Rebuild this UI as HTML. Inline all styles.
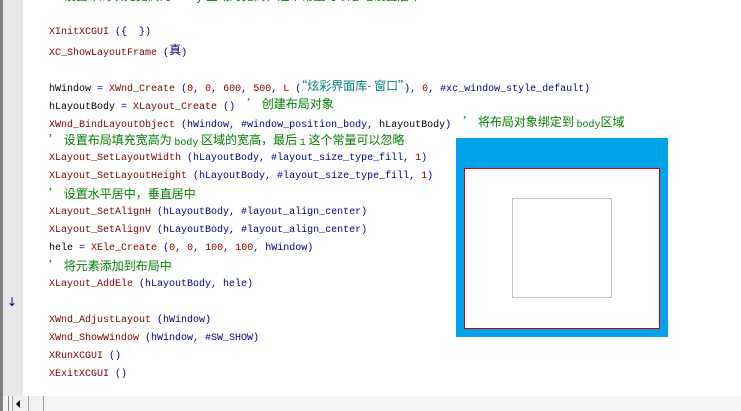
<!DOCTYPE html>
<html><head><meta charset="utf-8"><style>
body{margin:0;width:741px;height:411px;background:#fff;position:relative;overflow:hidden;font-family:"Liberation Mono","Noto Sans CJK SC",monospace;font-size:10px}
.l{position:absolute;left:49px;height:18px;line-height:18px;white-space:pre;color:#000;margin-top:2px}
.r{color:#800000}.n{color:#000080}.g{color:#008000}.t{color:#008080}
.c{font-family:"Noto Sans CJK SC","WenQuanYi Zen Hei",sans-serif;font-size:12px;position:relative;top:-1px}
</style></head><body>
<div style="position:absolute;left:0;top:0;width:3px;height:411px;background:#808080"></div>
<div style="position:absolute;left:3px;top:0;width:20px;height:396px;background:#e8e8e8"></div>
<div class="l g" style="top:-14px"><span class="c">’ 设置布局填充宽高为 body 区域的宽高，这个常量可以忽略设置居中</span></div>
<div class="l" style="top:22px"><span class="r">XInitXCGUI</span> <span class="n">({  })</span></div>
<div class="l" style="top:40px"><span class="r">XC_ShowLayoutFrame</span> <span class="n">(<span class="c">真</span>)</span></div>
<div class="l" style="top:76px">hWindow <span class="n">=</span> <span class="r">XWnd_Create</span> <span class="n">(</span><span class="r">0</span><span class="n">, </span><span class="r">0</span><span class="n">, </span><span class="r">600</span><span class="n">, </span><span class="r">500</span><span class="n">, </span><span class="r">L</span> <span class="n">(</span><span class="t c">“炫彩界面库- 窗口”</span><span class="n">), </span><span class="r">0</span><span class="n">, #xc_window_style_default)</span></div>
<div class="l" style="top:94px">hLayoutBody <span class="n">=</span> <span class="r">XLayout_Create</span> <span class="n">()</span>  <span class="g c">’ 创建布局对象</span></div>
<div class="l" style="top:112px"><span class="r">XWnd_BindLayoutObject</span> <span class="n">(hWindow, #window_position_body, </span>hLayoutBody<span class="n">)</span>  <span class="g c">’ 将布局对象绑定到 </span><span class="g">body</span><span class="g c">区域</span></div>
<div class="l g" style="top:130px"><span class="c">’ 设置布局填充宽高为 </span>body<span class="c"> 区域的宽高，最后 </span>1<span class="c"> 这个常量可以忽略</span></div>
<div class="l" style="top:148px"><span class="r">XLayout_SetLayoutWidth</span> <span class="n">(hLayoutBody, #layout_size_type_fill, </span><span class="r">1</span><span class="n">)</span></div>
<div class="l" style="top:166px"><span class="r">XLayout_SetLayoutHeight</span> <span class="n">(hLayoutBody, #layout_size_type_fill, </span><span class="r">1</span><span class="n">)</span></div>
<div class="l g" style="top:184px"><span class="c">’ 设置水平居中，垂直居中</span></div>
<div class="l" style="top:202px"><span class="r">XLayout_SetAlignH</span> <span class="n">(hLayoutBody, #layout_align_center)</span></div>
<div class="l" style="top:220px"><span class="r">XLayout_SetAlignV</span> <span class="n">(hLayoutBody, #layout_align_center)</span></div>
<div class="l" style="top:238px">hele <span class="n">=</span> <span class="r">XEle_Create</span> <span class="n">(</span><span class="r">0</span><span class="n">, </span><span class="r">0</span><span class="n">, </span><span class="r">100</span><span class="n">, </span><span class="r">100</span><span class="n">, hWindow)</span></div>
<div class="l g" style="top:256px"><span class="c">’ 将元素添加到布局中</span></div>
<div class="l" style="top:274px"><span class="r">XLayout_AddEle</span> <span class="n">(hLayoutBody, hele)</span></div>
<div style="position:absolute;left:7px;top:294px;color:#000080;font-size:12px;line-height:16px;font-family:'DejaVu Sans',sans-serif">↓</div>
<div class="l" style="top:310px"><span class="r">XWnd_AdjustLayout</span> <span class="n">(hWindow)</span></div>
<div class="l" style="top:328px"><span class="r">XWnd_ShowWindow</span> <span class="n">(hWindow, #SW_SHOW)</span></div>
<div class="l" style="top:346px"><span class="r">XRunXCGUI</span> <span class="n">()</span></div>
<div class="l" style="top:364px"><span class="r">XExitXCGUI</span> <span class="n">()</span></div>
<div style="position:absolute;left:456px;top:138px;width:212px;height:199px;background:#00a2e8"></div>
<div style="position:absolute;left:464px;top:168px;width:194px;height:159px;background:#fff;border:1px solid #e00000"></div>
<div style="position:absolute;left:512px;top:198px;width:98px;height:98px;border:1px solid #c3c3c3"></div>
<div style="position:absolute;left:0;top:396px;width:741px;height:15px;background:#f4f4f4"></div>
<div style="position:absolute;left:0;top:396px;width:3px;height:15px;background:#808080"></div>
<div style="position:absolute;left:8px;top:396px;width:1px;height:15px;background:#808080"></div>
<div style="position:absolute;left:12px;top:396px;width:15px;height:15px;background:#f0f0f0;border-left:1px solid #a0a0a0;border-right:1px solid #a0a0a0"></div>
<div style="position:absolute;left:16px;top:400px;width:0;height:0;border-top:4px solid transparent;border-bottom:4px solid transparent;border-right:4px solid #000"></div>
<div style="position:absolute;left:29px;top:396px;width:14px;height:15px;background:#f0f0f0;border-right:1px solid #a0a0a0"></div>
</body></html>
